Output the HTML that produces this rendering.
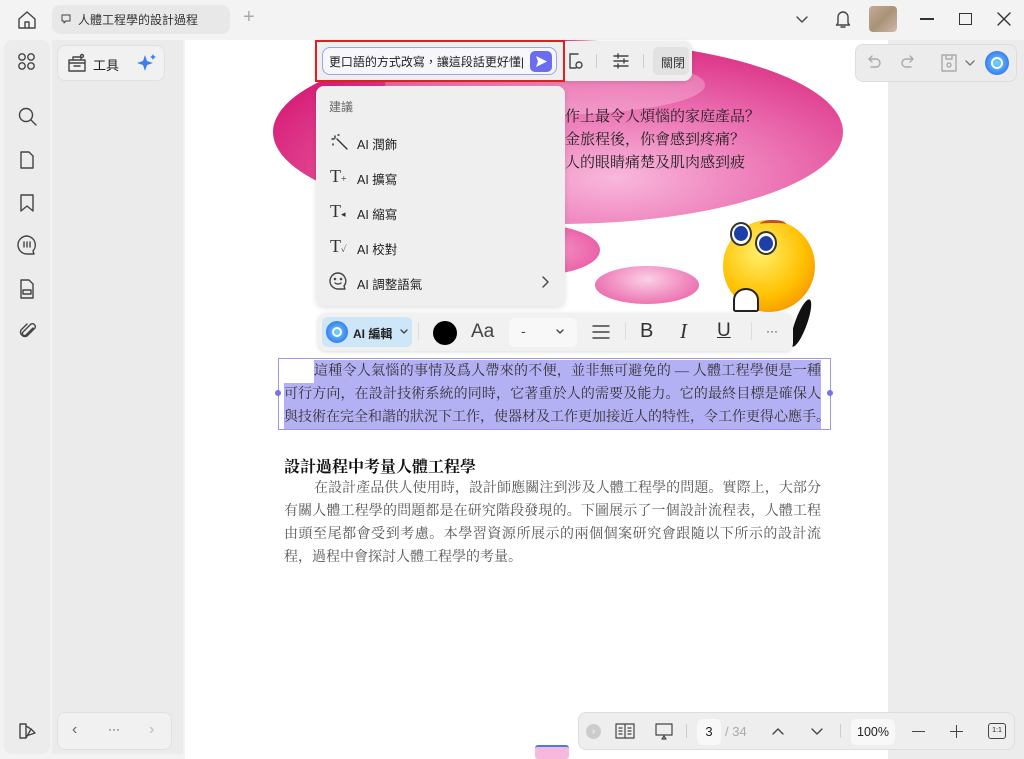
<!DOCTYPE html>
<html><head><meta charset="utf-8"><style>
*{box-sizing:border-box;margin:0;padding:0}
body{width:1024px;height:759px;overflow:hidden;background:#f3f3f3;font-family:"Liberation Sans","Noto Sans CJK TC",sans-serif;position:relative;color:#222}
.a{position:absolute}
.serif{font-family:"Liberation Serif","Noto Serif CJK SC",serif}
svg{display:block}
.ic{stroke:#444;fill:none;stroke-width:1.4;stroke-linecap:round;stroke-linejoin:round}
.ln{white-space:nowrap;text-align:justify;text-align-last:justify;height:23px;overflow:hidden}
</style></head><body>
<!-- title bar -->
<div class="a" style="left:0;top:0;width:1024px;height:38px;background:#f3f3f3"></div>
<svg class="a ic" style="left:16px;top:9px" width="22" height="22" viewBox="0 0 22 22"><path d="M3 10 L11 3 L19 10 V19 H3 Z M9 19 V13 H13 V19"/></svg>
<div class="a" style="left:52px;top:5px;width:178px;height:29px;background:#e8e8e8;border-radius:8px"></div>
<svg class="a ic" style="left:60px;top:13px" width="12" height="12" viewBox="0 0 12 12"><path d="M2 2h8v6H6l-2 2V8H2z" stroke-width="1"/></svg>
<div class="a" style="left:78px;top:11px;font-size:12px;color:#333">人體工程學的設計過程</div>
<div class="a" style="left:243px;top:6px;font-size:20px;color:#aaa">+</div>
<svg class="a ic" style="left:795px;top:13px" width="14" height="12"><path d="M2 4l5 5 5-5"/></svg>
<svg class="a ic" style="left:834px;top:8px" width="18" height="22" viewBox="0 0 18 22"><path d="M4 15V9a5 5 0 0110 0v6l1.5 2h-13z M7 19h4"/></svg>
<div class="a" style="left:869px;top:6px;width:28px;height:26px;border-radius:4px;background:linear-gradient(135deg,#c9a99a,#a89378,#d1b8a8)"></div>
<div class="a" style="left:920px;top:18px;width:14px;height:1.5px;background:#333"></div>
<div class="a" style="left:959px;top:13px;width:13px;height:12px;border:1.5px solid #333"></div>
<svg class="a ic" style="left:997px;top:12px" width="14" height="14"><path d="M1 1l12 12M13 1L1 13" stroke="#333"/></svg>
<!-- left sidebar -->
<div class="a" style="left:4px;top:40px;width:46px;height:714px;background:#ececec;border-radius:8px"></div>
<div class="a" style="left:52px;top:40px;width:131px;height:714px;background:#ebebeb"></div>
<svg class="a ic" style="left:17px;top:52px" width="20" height="20"><circle cx="5" cy="5" r="3.2"/><circle cx="14" cy="5" r="3.2"/><circle cx="5" cy="14" r="3.2"/><circle cx="14" cy="14" r="3.2"/></svg>
<svg class="a ic" style="left:17px;top:106px" width="22" height="22"><circle cx="9" cy="9" r="6.5"/><path d="M14 14l5 5"/></svg>
<svg class="a ic" style="left:18px;top:150px" width="18" height="20"><path d="M3 2h8l4 4v12H3z"/></svg>
<svg class="a ic" style="left:19px;top:193px" width="16" height="20"><path d="M2 2h12v16l-6-5-6 5z"/></svg>
<svg class="a ic" style="left:16px;top:234px" width="22" height="22"><path d="M11 2a9 9 0 100 18h7l-1-3A9 9 0 0011 2z M8 8v5M11 8v5M14 8v5"/></svg>
<svg class="a ic" style="left:18px;top:278px" width="18" height="22"><path d="M3 2h8l4 4v14H3z M5 12h8v4H5z"/></svg>
<svg class="a ic" style="left:18px;top:321px" width="20" height="20"><path d="M15 7l-7 7a2 2 0 01-3-3l8-8a3 3 0 014 4l-8 8a4.5 4.5 0 01-6-6l6-6"/></svg>
<svg class="a ic" style="left:17px;top:721px" width="22" height="20"><path d="M3 3h6v14H3z M9 5l5 3-5 9 M9 15l9-3-4-4"/></svg>
<div class="a" style="left:57px;top:45px;width:108px;height:36px;background:#f1f1f1;border:1px solid #e0e0e0;border-radius:8px"></div>
<svg class="a ic" style="left:66px;top:52px" width="22" height="22"><path d="M3 8h16v11H3z M3 11h16 M8 14h6 M7 8V5h8v3"/><circle cx="16" cy="4" r="1.5"/></svg>
<div class="a" style="left:93px;top:55px;font-size:13px;color:#222">工具</div>
<svg class="a" style="left:136px;top:52px" width="22" height="22" viewBox="0 0 22 22"><path d="M9 3l2 6 6 2-6 2-2 6-2-6-6-2 6-2z" fill="#3a7ef0"/><path d="M17 2l1 2 2 1-2 1-1 2-1-2-2-1 2-1z" fill="#3a7ef0"/></svg>
<div class="a" style="left:57px;top:712px;width:115px;height:38px;background:#f1f1f1;border:1px solid #e0e0e0;border-radius:8px"></div>
<div class="a" style="left:72px;top:721px;font-size:16px;color:#666">‹</div>
<div class="a" style="left:108px;top:722px;font-size:12px;color:#444">···</div>
<div class="a" style="left:149px;top:721px;font-size:16px;color:#bbb">›</div>
<!-- right panel -->
<div class="a" style="left:888px;top:40px;width:136px;height:719px;background:#ececec"></div>
<!-- page -->
<div class="a" style="left:185px;top:40px;width:703px;height:719px;background:#fff;overflow:hidden">
  <div class="a" style="left:88px;top:0px;width:570px;height:184px;border-radius:50%;background:radial-gradient(ellipse at 60% 75%,#f8b8dc 0%,#ea6aae 40%,#d4136e 85%)"></div>
  <div class="a" style="left:200px;top:15px;width:320px;height:60px;border-radius:50%;background:rgba(255,255,255,.25)"></div>
  <div class="a" style="left:290px;top:185px;width:125px;height:50px;border-radius:50%;background:radial-gradient(ellipse,#f7a3cd,#e6489a)"></div>
  <div class="a" style="left:410px;top:226px;width:104px;height:38px;border-radius:50%;background:radial-gradient(ellipse at 50% 35%,#fbd0e6,#ef83bb 60%,#e4559f)"></div>
  <div class="a serif" style="left:380px;top:66px;font-size:15px;line-height:23px;color:#222">作上最令人煩惱的家庭產品？<br>金旅程後，你會感到疼痛？<br>人的眼睛痛楚及肌肉感到疲</div>
  <!-- smiley -->
  <div class="a" style="left:538px;top:180px;width:92px;height:92px;border-radius:50%;background:radial-gradient(circle at 40% 35%,#fff06a,#ffc000 55%,#f07800)"></div>
  <div class="a" style="left:545px;top:182px;width:22px;height:24px;border-radius:50%;background:#fff;border:2px solid #333"></div>
  <div class="a" style="left:549px;top:186px;width:14px;height:15px;border-radius:50%;background:#1d3fa8"></div>
  <div class="a" style="left:570px;top:191px;width:22px;height:24px;border-radius:50%;background:#fff;border:2px solid #333"></div>
  <div class="a" style="left:574px;top:196px;width:14px;height:15px;border-radius:50%;background:#1d3fa8"></div>
  <div class="a" style="left:575px;top:180px;width:26px;height:8px;border-top:3px solid #c0501a;border-radius:50%"></div>
  <div class="a" style="left:548px;top:248px;width:26px;height:24px;background:#fff;border:2px solid #222;border-radius:50% 50% 10% 10%"></div>
  <div class="a" style="left:610px;top:258px;width:12px;height:50px;background:#111;border-radius:50%;transform:rotate(20deg)"></div>
  <!-- selected paragraph -->
  <div class="a" style="left:93px;top:318px;width:553px;height:72px;border:1px solid #9b97e8"></div>
  <div class="a" style="left:90px;top:350px;width:6px;height:6px;border-radius:50%;background:#7872e6"></div>
  <div class="a" style="left:642px;top:350px;width:6px;height:6px;border-radius:50%;background:#7872e6"></div>
  <div class="a serif" style="left:99px;top:320px;width:537px;font-size:14px;line-height:23px;color:#333">
    <div class="ln" style="padding-left:30px"><span style="background:#b4b0f4;display:block">這種令人氣惱的事情及爲人帶來的不便，並非無可避免的 — 人體工程學便是一種</span></div>
    <div class="ln" style="background:#b4b0f4">可行方向，在設計技術系統的同時，它著重於人的需要及能力。它的最終目標是確保人</div>
    <div class="ln" style="background:#b4b0f4">與技術在完全和諧的狀況下工作，使器材及工作更加接近人的特性，令工作更得心應手。</div>
  </div>
  <div class="a serif" style="left:99px;top:414px;font-size:16px;font-weight:bold;color:#111">設計過程中考量人體工程學</div>
  <div class="a serif" style="left:99px;top:437px;width:537px;font-size:14px;line-height:23.5px;color:#555">
    <div class="ln" style="padding-left:30px">在設計產品供人使用時，設計師應關注到涉及人體工程學的問題。實際上，大部分</div>
    <div class="ln">有關人體工程學的問題都是在研究階段發現的。下圖展示了一個設計流程表，人體工程</div>
    <div class="ln">由頭至尾都會受到考慮。本學習資源所展示的兩個個案研究會跟隨以下所示的設計流</div>
    <div style="white-space:nowrap">程，過程中會探討人體工程學的考量。</div>
  </div>
  <div class="a" style="left:350px;top:705px;width:34px;height:14px;background:#f6b8dc;border-top:2px solid #4a7be0;border-radius:3px"></div>
</div>
<!-- right top toolbar -->
<div class="a" style="left:855px;top:44px;width:162px;height:38px;background:#ececec;border:1px solid #ddd;border-radius:8px"></div>
<svg class="a ic" style="left:866px;top:55px" width="16" height="14"><path d="M3 4h7a4 4 0 010 8H5 M3 4l3-3M3 4l3 3" stroke="#aaa"/></svg>
<svg class="a ic" style="left:900px;top:55px" width="16" height="14"><path d="M13 4H6a4 4 0 000 8h5 M13 4l-3-3M13 4l-3 3" stroke="#aaa"/></svg>
<svg class="a ic" style="left:940px;top:53px" width="18" height="20"><path d="M2 2h14v16H2z M6 2v4h6V2" stroke="#aaa"/><circle cx="9" cy="12" r="2" stroke="#aaa"/></svg>
<svg class="a ic" style="left:965px;top:59px" width="10" height="8"><path d="M1 2l4 4 4-4" stroke="#777"/></svg>
<div class="a" style="left:985px;top:51px;width:24px;height:24px;border-radius:50%;background:radial-gradient(circle,#6fd6ff,#3a7ef0 70%,#5b5df0)"></div>
<div class="a" style="left:991px;top:57px;width:12px;height:12px;border-radius:50%;border:2px solid #fff"></div>
<!-- top toolbar -->
<div class="a" style="left:315px;top:41px;width:377px;height:40px;background:#efefef;border-radius:8px;box-shadow:0 1px 4px rgba(0,0,0,.12)"></div>
<div class="a" style="left:315px;top:40px;width:250px;height:42px;border:2px solid #e02020"></div>
<div class="a" style="left:322px;top:47px;width:235px;height:28px;border:1.5px solid #9ea0f0;border-radius:8px;background:#f6f6fb"></div>
<div class="a" style="left:330px;top:53px;font-size:12px;color:#222;white-space:nowrap;width:194px;overflow:hidden;display:flex;justify-content:flex-end">用更口語的方式改寫，讓這段話更好懂|</div>
<div class="a" style="left:530px;top:51px;width:22px;height:21px;background:#6b6df0;border-radius:5px"></div>
<svg class="a" style="left:534px;top:55px" width="14" height="13"><path d="M2 1l11 5.5L2 12l2-5.5z" fill="#fff"/></svg>
<svg class="a ic" style="left:566px;top:51px" width="18" height="20"><path d="M12 3H4v14h6" /><circle cx="13" cy="14" r="3"/></svg>
<div class="a" style="left:596px;top:54px;width:1px;height:14px;background:#ccc"></div>
<svg class="a ic" style="left:612px;top:52px" width="18" height="18"><path d="M2 4h14M2 9h14M2 14h14M6 2v4M12 7v4M6 12v4"/></svg>
<div class="a" style="left:643px;top:54px;width:1px;height:14px;background:#ccc"></div>
<div class="a" style="left:653px;top:47px;width:36px;height:28px;background:#e2e2e2;border-radius:5px"></div>
<div class="a" style="left:661px;top:54px;font-size:12px;color:#333">關閉</div>
<!-- dropdown -->
<div class="a" style="left:316px;top:86px;width:249px;height:220px;background:#efefef;border-radius:8px;box-shadow:0 2px 6px rgba(0,0,0,.12)"></div>
<div class="a" style="left:329px;top:98px;font-size:12px;color:#666">建議</div>
<svg class="a ic" style="left:329px;top:132px" width="20" height="20"><path d="M8 7l10 10M6 4v2M3 7h2M4 12v1M9 3h1" stroke="#333"/></svg>
<div class="a" style="left:357px;top:134px;font-size:12.5px">AI 潤飾</div>
<div class="a serif" style="left:330px;top:166px;font-size:18px;color:#333">T<span style="font-size:10px">+</span></div>
<div class="a" style="left:357px;top:169px;font-size:12.5px">AI 擴寫</div>
<div class="a serif" style="left:330px;top:201px;font-size:18px;color:#333">T<span style="font-size:9px">◂</span></div>
<div class="a" style="left:357px;top:204px;font-size:12.5px">AI 縮寫</div>
<div class="a serif" style="left:330px;top:236px;font-size:18px;color:#333">T<span style="font-size:9px">✓</span></div>
<div class="a" style="left:357px;top:239px;font-size:12.5px">AI 校對</div>
<svg class="a ic" style="left:328px;top:271px" width="20" height="20"><path d="M10 2a8 8 0 100 16h7l-1-3a8 8 0 00-6-13z M7 12a4 3 0 006 0"/><circle cx="7" cy="8" r=".6"/><circle cx="13" cy="8" r=".6"/></svg>
<div class="a" style="left:357px;top:274px;font-size:12.5px">AI 調整語氣</div>
<svg class="a ic" style="left:541px;top:276px" width="8" height="12"><path d="M2 1l5 5-5 5"/></svg>
<!-- format toolbar -->
<div class="a" style="left:318px;top:313px;width:475px;height:38px;background:#f1f1f1;border-radius:8px;box-shadow:0 1px 4px rgba(0,0,0,.14)"></div>
<div class="a" style="left:322px;top:317px;width:90px;height:30px;background:#cde6f8;border-radius:6px"></div>
<div class="a" style="left:326px;top:321px;width:22px;height:22px;border-radius:50%;background:radial-gradient(circle,#6fd6ff,#3a7ef0 70%,#5b5df0)"></div>
<div class="a" style="left:332px;top:327px;width:10px;height:10px;border-radius:50%;border:2px solid #fff"></div>
<div class="a" style="left:353px;top:325px;font-size:12px;font-weight:bold;color:#222">AI 編輯</div>
<svg class="a ic" style="left:400px;top:329px" width="8" height="6"><path d="M1 1l3 3 3-3"/></svg>
<div class="a" style="left:418px;top:322px;width:1px;height:18px;background:#ddd"></div>
<div class="a" style="left:433px;top:321px;width:24px;height:24px;border-radius:50%;background:#000"></div>
<div class="a" style="left:471px;top:321px;font-size:19px;color:#444">Aa</div>
<div class="a" style="left:509px;top:318px;width:68px;height:29px;background:#f8f8f8;border-radius:6px"></div>
<div class="a" style="left:521px;top:323px;font-size:14px;color:#444">-</div>
<svg class="a ic" style="left:556px;top:329px" width="8" height="6"><path d="M1 1l3 3 3-3"/></svg>
<svg class="a ic" style="left:592px;top:324px" width="18" height="16"><path d="M1 2h16M1 8h16M1 14h16"/></svg>
<div class="a" style="left:625px;top:322px;width:1px;height:18px;background:#ddd"></div>
<div class="a" style="left:640px;top:320px;font-size:20px;color:#333">B</div>
<div class="a serif" style="left:680px;top:319px;font-size:21px;color:#333;font-style:italic">I</div>
<div class="a" style="left:717px;top:320px;font-size:19px;color:#333;text-decoration:underline">U</div>
<div class="a" style="left:751px;top:322px;width:1px;height:18px;background:#ddd"></div>
<div class="a" style="left:766px;top:324px;font-size:12px;color:#333">···</div>
<!-- bottom toolbar -->
<div class="a" style="left:578px;top:712px;width:437px;height:38px;background:#eeeeee;border:1px solid #ddd;border-radius:8px"></div>
<div class="a" style="left:586px;top:724px;width:15px;height:15px;border-radius:50%;background:#ccc;color:#fff;font-size:10px;text-align:center;line-height:15px">›</div>
<svg class="a ic" style="left:614px;top:722px" width="22" height="18"><path d="M2 2h18v14H2z M11 2v14 M5 6h3M5 9h3M5 12h3M14 6h3M14 9h3M14 12h3" stroke-width="1.2"/></svg>
<svg class="a ic" style="left:653px;top:722px" width="22" height="18"><path d="M3 2h16v11H3z M9 17l2-3 2 3z" stroke-width="1.2"/></svg>
<div class="a" style="left:686px;top:724px;width:1px;height:14px;background:#ccc"></div>
<div class="a" style="left:697px;top:719px;width:24px;height:26px;background:#f8f8f8;border-radius:5px;font-size:13px;text-align:center;line-height:26px">3</div>
<div class="a" style="left:725px;top:724px;font-size:13px;color:#aaa">/ 34</div>
<svg class="a ic" style="left:771px;top:726px" width="14" height="10"><path d="M2 8l5-5 5 5"/></svg>
<svg class="a ic" style="left:810px;top:727px" width="14" height="10"><path d="M2 2l5 5 5-5"/></svg>
<div class="a" style="left:840px;top:724px;width:1px;height:14px;background:#ccc"></div>
<div class="a" style="left:851px;top:719px;width:44px;height:26px;background:#f8f8f8;border-radius:5px;font-size:12.5px;text-align:center;line-height:26px">100%</div>
<div class="a" style="left:912px;top:731px;width:13px;height:1.3px;background:#444"></div>
<div class="a" style="left:950px;top:731px;width:13px;height:1.3px;background:#444"></div>
<div class="a" style="left:956px;top:725px;width:1.3px;height:13px;background:#444"></div>
<div class="a" style="left:988px;top:723px;width:18px;height:16px;border:1.3px solid #444;border-radius:3px;font-size:7px;text-align:center;line-height:13px">1:1</div>
</body></html>
